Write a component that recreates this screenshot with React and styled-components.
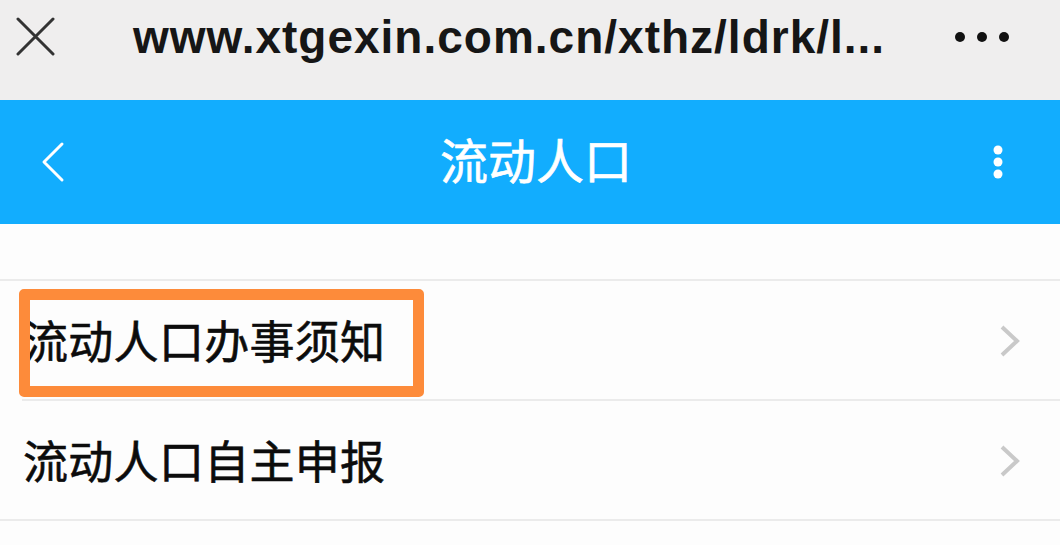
import React from 'react';
import styled, { createGlobalStyle } from 'styled-components';

const GlobalStyle = createGlobalStyle`
  html, body {
    margin: 0;
    padding: 0;
    background: #fdfdfd;
  }
  body {
    font-family: 'Noto Sans CJK SC', 'Noto Sans', sans-serif;
  }
`;

const Page = styled.div`
  width: 1060px;
  height: 545px;
  overflow: hidden;
  display: flex;
  flex-direction: column;
  background: #fdfdfd;
`;

const BrowserBar = styled.div`
  height: 100px;
  flex-shrink: 0;
  background: #efeeee;
  display: flex;
  align-items: center;
  padding: 0 50px 0 16px;
  box-sizing: border-box;
`;

const UrlText = styled.div`
  flex: 1;
  margin-left: 77px;
  margin-top: -26px;
  font-family: 'Liberation Sans', Arial, sans-serif;
  font-weight: 700;
  font-size: 46px;
  color: #161616;
  white-space: nowrap;
  letter-spacing: 1px;
`;

const Header = styled.div`
  height: 124px;
  flex-shrink: 0;
  background: #12adfe;
  display: flex;
  align-items: center;
  justify-content: space-between;
  padding: 0 56px 0 40px;
  box-sizing: border-box;
  position: relative;
`;

const Title = styled.div`
  position: absolute;
  left: 0;
  right: 0;
  text-align: center;
  padding-left: 12px;
  margin-top: -8px;
  font-size: 48px;
  color: #ffffff;
  -webkit-text-stroke: 0.6px #ffffff;
  pointer-events: none;
`;

const Spacer = styled.div`
  height: 55px;
  flex-shrink: 0;
  border-bottom: 2px solid #ebebeb;
`;

const List = styled.div`
  display: flex;
  flex-direction: column;
`;

const Row = styled.div`
  position: relative;
  height: 120px;
  display: flex;
  align-items: center;
  justify-content: space-between;
  padding: 0 38px 0 23px;
  box-sizing: border-box;
  &::after {
    content: '';
    position: absolute;
    bottom: 0;
    left: ${p => (p.$inset ? '22px' : '0')};
    right: 0;
    height: 2px;
    background: #ebebeb;
  }
`;

const RowLabel = styled.div`
  font-size: 45px;
  color: #0c0c0c;
  -webkit-text-stroke: 0.6px #0c0c0c;
  letter-spacing: 0.3px;
  margin-top: -4px;
`;

const Highlight = styled.div`
  position: absolute;
  left: 19px;
  top: 8px;
  width: 405px;
  height: 108px;
  box-sizing: border-box;
  border: 11px solid #fd8b3a;
  border-radius: 5px;
`;

const CloseIcon = () => (
  <svg width="40" height="40" viewBox="0 0 40 40" style={{ marginTop: '-26px' }}>
    <path d="M2 2 L37 37 M37 2 L2 37" stroke="#333" strokeWidth="3" strokeLinecap="round" />
  </svg>
);

const MoreIcon = () => (
  <svg width="56" height="12" viewBox="0 0 56 12" style={{ marginTop: '-26px' }}>
    <circle cx="6" cy="6" r="5" fill="#111" />
    <circle cx="28" cy="6" r="5" fill="#111" />
    <circle cx="50" cy="6" r="5" fill="#111" />
  </svg>
);

const BackIcon = () => (
  <svg width="26" height="42" viewBox="0 0 26 42">
    <path d="M22 3 L4 21 L22 39" fill="none" stroke="#fff" strokeWidth="3" strokeLinecap="round" strokeLinejoin="round" />
  </svg>
);

const KebabIcon = () => (
  <svg width="12" height="34" viewBox="0 0 12 34">
    <circle cx="6" cy="5" r="4.5" fill="#fff" />
    <circle cx="6" cy="17" r="4.5" fill="#fff" />
    <circle cx="6" cy="29" r="4.5" fill="#fff" />
  </svg>
);

const ChevronIcon = () => (
  <svg width="24" height="34" viewBox="0 0 24 34">
    <path d="M4 3 L19 17 L4 31" fill="none" stroke="#c9c9c9" strokeWidth="4" strokeLinejoin="miter" />
  </svg>
);

const items = [
  { label: '流动人口办事须知', highlighted: true, inset: true },
  { label: '流动人口自主申报', highlighted: false, inset: false },
];

export default function App() {
  return (
    <>
      <GlobalStyle />
      <Page>
        <BrowserBar>
          <CloseIcon />
          <UrlText>www.xtgexin.com.cn/xthz/ldrk/l...</UrlText>
          <MoreIcon />
        </BrowserBar>
        <Header>
          <BackIcon />
          <Title>流动人口</Title>
          <KebabIcon />
        </Header>
        <Spacer />
        <List>
          {items.map(item => (
            <Row key={item.label} $inset={item.inset}>
              <RowLabel>{item.label}</RowLabel>
              <ChevronIcon />
              {item.highlighted && <Highlight />}
            </Row>
          ))}
        </List>
      </Page>
    </>
  );
}
